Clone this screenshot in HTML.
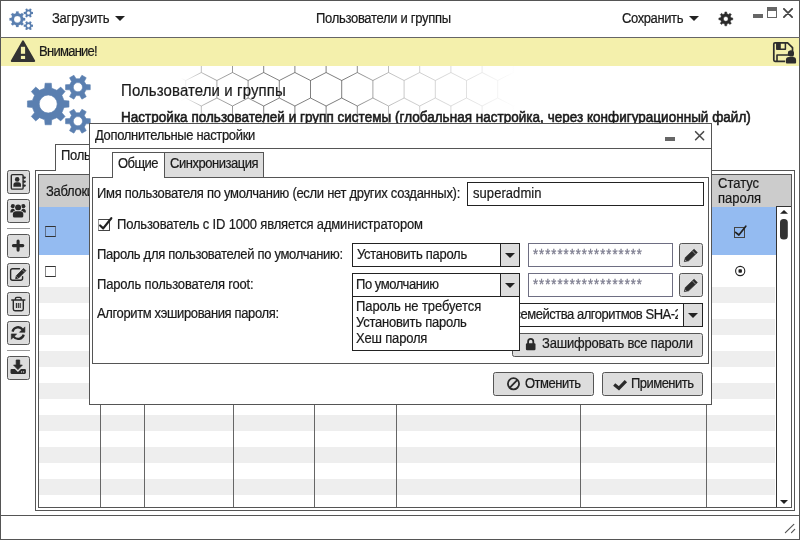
<!DOCTYPE html>
<html><head><meta charset="utf-8">
<style>
html,body{margin:0;padding:0;}
body{width:800px;height:540px;overflow:hidden;background:#fff;position:relative;font-family:"Liberation Sans",sans-serif;font-size:13px;color:#1a1a1a;}
.a{position:absolute;}
.t{position:absolute;white-space:nowrap;will-change:transform;transform:scaleY(1.07);transform-origin:0 78%;line-height:16px;letter-spacing:-0.3px;-webkit-text-stroke:0.2px #1a1a1a;}
.ln{position:absolute;background:#555;}
.btn{position:absolute;background:#ddd;border:1px solid #555;border-radius:2.5px;box-sizing:border-box;}
.cmb{position:absolute;background:#fff;border:1px solid #222;box-sizing:border-box;}
.cmb .ar{position:absolute;right:0;top:0;bottom:0;width:18px;background:#ddd;border-left:1px solid #222;}
.tri{position:absolute;width:0;height:0;border-left:5px solid transparent;border-right:5px solid transparent;border-top:5.5px solid #222;}
.pw{position:absolute;background:#fff;border:1px solid #6e6e82;box-sizing:border-box;}
</style></head><body>

<!-- ===== main window frame ===== -->
<div class="a" style="left:0;top:0;width:800px;height:540px;box-sizing:border-box;border:1px solid #555;"></div>
<div class="ln" style="left:0;top:37px;width:800px;height:1px;background:#666;"></div>
<div class="a" style="left:1px;top:38px;width:798px;height:28px;background:#f4f0ac;"></div>
<div class="ln" style="left:0;top:515px;width:800px;height:1px;"></div>

<svg class="a" style="left:780px;top:520px;" width="18" height="18" viewBox="780 520 18 18"><path d="M785.4 532.6 L793.8 524.4 M791.5 532.6 L794.7 529.4" stroke="#555" stroke-width="1.2" stroke-linecap="round"/></svg>
<!-- title bar -->
<svg class="a" style="left:8.5px;top:7.5px;" width="24.75" height="22.5"><use href="#cogs" width="24.75" height="22.5"/></svg>
<svg class="a" style="left:26px;top:74px;" width="66" height="60"><use href="#cogs" width="66" height="60"/></svg>
<div class="t" style="left:52px;top:11px;letter-spacing:-0.23px;">Загрузить</div>
<div class="tri" style="left:115px;top:16px;"></div>
<div class="t" style="left:316px;top:11px;">Пользователи и группы</div>
<div class="t" style="left:622px;top:11px;letter-spacing:-0.40px;">Сохранить</div>
<div class="tri" style="left:689px;top:16px;"></div>
<div class="a" style="left:753px;top:14px;width:10px;height:4px;background:#666;"></div>
<div class="a" style="left:767px;top:7px;width:10px;height:11px;box-sizing:border-box;border:1px solid #666;border-top:4px solid #666;"></div>
<svg class="a" style="left:783px;top:8px;" width="10" height="10" viewBox="0 0 10 10"><path d="M0.9 0.9 L9.1 9.1 M9.1 0.9 L0.9 9.1" stroke="#444" stroke-width="1.8" fill="none" stroke-linecap="round"/></svg>

<svg class="a" style="left:716px;top:9px;" width="20" height="20" viewBox="716 9 20 20"><path d="M726.83 24.10 L726.73 25.84 L724.87 25.84 L724.77 24.10 L722.86 23.31 L721.55 24.46 L720.24 23.15 L721.39 21.84 L720.60 19.93 L718.86 19.83 L718.86 17.97 L720.60 17.87 L721.39 15.96 L720.24 14.65 L721.55 13.34 L722.86 14.49 L724.77 13.70 L724.87 11.96 L726.73 11.96 L726.83 13.70 L728.74 14.49 L730.05 13.34 L731.36 14.65 L730.21 15.96 L731.00 17.87 L732.74 17.97 L732.74 19.83 L731.00 19.93 L730.21 21.84 L731.36 23.15 L730.05 24.46 L728.74 23.31Z M728.20 18.90 A2.40 2.40 0 1 0 723.40 18.90 A2.40 2.40 0 1 0 728.20 18.90 Z" fill="#2a2a2a" stroke="#2a2a2a" stroke-width="0.5" stroke-linejoin="round" fill-rule="evenodd"/></svg>
<svg class="a" style="left:770px;top:39px;" width="29" height="27" viewBox="770 39 29 27"><path d="M775 42.9 H787.6 L792.5 47.6 V61.3 H775 Q773.8 61.3 773.8 60.1 V44.1 Q773.8 42.9 775 42.9 Z" fill="none" stroke="#2d2d2d" stroke-width="1.7" stroke-linejoin="round"/><path d="M776.8 42.9 V49.2 H785.4 V42.9" fill="none" stroke="#2d2d2d" stroke-width="1.5" stroke-linejoin="round"/><rect x="776.8" y="42.9" width="4" height="6.3" fill="#2d2d2d"/><path d="M777 61.3 V55 H792.5" fill="none" stroke="#2d2d2d" stroke-width="1.6" stroke-linejoin="round"/><circle cx="790.9" cy="53.5" r="3.0" fill="#2d2d2d"/><path d="M785.2 64 V60 Q785.2 56.4 789 56.4 H793 Q796.8 56.4 796.8 60 V64 Z" fill="#f4f0ac"/><circle cx="790.9" cy="53.5" r="3.0" fill="#2d2d2d"/><path d="M785.9 62.5 V60 Q785.9 57.1 789 57.1 H793 Q796.1 57.1 796.1 60 V62.5 Q796.1 63.5 795.1 63.5 H786.9 Q785.9 63.5 785.9 62.5 Z" fill="#2d2d2d"/></svg>
<!-- warning bar -->
<svg class="a" style="left:9px;top:38px;" width="30" height="28" viewBox="9 38 30 28"><path d="M23 41.3 L34.3 61 L11.7 61 Z" fill="#333" stroke="#333" stroke-width="1.8" stroke-linejoin="round"/><rect x="20.9" y="46.8" width="4.2" height="7" fill="#f4f0ac"/><rect x="20.9" y="55.9" width="4.2" height="3.1" fill="#f4f0ac"/></svg>

<div class="t" style="left:39px;top:44px;letter-spacing:-0.73px;">Внимание!</div>

<!-- hex background -->
<svg class="a" style="left:170px;top:66px;" width="360" height="57" viewBox="170 66 360 57">
<defs><linearGradient id="hg" x1="0" x2="1" y1="0" y2="0"><stop offset="0.03" stop-color="#fff" stop-opacity="0"/><stop offset="0.1" stop-color="#fff" stop-opacity="0.6"/><stop offset="0.25" stop-color="#fff" stop-opacity="0.95"/><stop offset="0.49" stop-color="#fff" stop-opacity="1"/><stop offset="0.62" stop-color="#fff" stop-opacity="0.45"/><stop offset="0.83" stop-color="#fff" stop-opacity="0.22"/><stop offset="0.96" stop-color="#fff" stop-opacity="0"/></linearGradient>
<mask id="hm" maskUnits="userSpaceOnUse" x="170" y="66" width="360" height="57"><rect x="170" y="66" width="360" height="57" fill="url(#hg)"/></mask></defs>
<path d="M138.9 72.5 L154.5 80.5 L170.1 72.5 L185.7 80.5 L201.3 72.5 L216.9 80.5 L232.5 72.5 L248.1 80.5 L263.7 72.5 L279.3 80.5 L294.9 72.5 L310.5 80.5 L326.1 72.5 L341.7 80.5 L357.3 72.5 L372.9 80.5 L388.5 72.5 L404.1 80.5 L419.7 72.5 L435.3 80.5 L450.9 72.5 L466.5 80.5 L482.1 72.5 L497.7 80.5 L513.3 72.5 L528.9 80.5 L544.5 72.5 L560.1 80.5 M138.9 106.0 L154.5 98.0 L170.1 106.0 L185.7 98.0 L201.3 106.0 L216.9 98.0 L232.5 106.0 L248.1 98.0 L263.7 106.0 L279.3 98.0 L294.9 106.0 L310.5 98.0 L326.1 106.0 L341.7 98.0 L357.3 106.0 L372.9 98.0 L388.5 106.0 L404.1 98.0 L419.7 106.0 L435.3 98.0 L450.9 106.0 L466.5 98.0 L482.1 106.0 L497.7 98.0 L513.3 106.0 L528.9 98.0 L544.5 106.0 L560.1 98.0 M138.9 55 V72.5 M154.5 80.5 V98 M138.9 106 V123.5 M170.1 55 V72.5 M185.7 80.5 V98 M170.1 106 V123.5 M201.3 55 V72.5 M216.9 80.5 V98 M201.3 106 V123.5 M232.5 55 V72.5 M248.1 80.5 V98 M232.5 106 V123.5 M263.7 55 V72.5 M279.3 80.5 V98 M263.7 106 V123.5 M294.9 55 V72.5 M310.5 80.5 V98 M294.9 106 V123.5 M326.1 55 V72.5 M341.7 80.5 V98 M326.1 106 V123.5 M357.3 55 V72.5 M372.9 80.5 V98 M357.3 106 V123.5 M388.5 55 V72.5 M404.1 80.5 V98 M388.5 106 V123.5 M419.7 55 V72.5 M435.3 80.5 V98 M419.7 106 V123.5 M450.9 55 V72.5 M466.5 80.5 V98 M450.9 106 V123.5 M482.1 55 V72.5 M497.7 80.5 V98 M482.1 106 V123.5 M513.3 55 V72.5 M528.9 80.5 V98 M513.3 106 V123.5 M544.5 55 V72.5 M560.1 80.5 V98 M544.5 106 V123.5" stroke="#333" stroke-width="0.8" stroke-opacity="0.8" fill="none" mask="url(#hm)"/>
</svg>
<!-- header -->
<div class="t" style="left:121px;top:81px;font-size:15px;line-height:20px;letter-spacing:0.1px;">Пользователи и группы</div>
<div class="t" style="left:121px;top:109px;font-size:13.5px;line-height:18px;letter-spacing:0.02px;-webkit-text-stroke:0.55px #1a1a1a;">Настройка пользователей и групп системы (глобальная настройка, через конфигурационный файл)</div>

<!-- main tab + panel -->
<div class="a" style="left:35px;top:170px;width:760px;height:341px;box-sizing:border-box;border:1px solid #555;"></div>
<div class="a" style="left:55px;top:144px;width:60px;height:27px;box-sizing:border-box;border:1px solid #555;border-bottom:none;background:#fff;"></div>
<div class="t" style="left:61px;top:148px;">Пользователи</div>

<!-- sidebar -->
<div class="btn" style="left:6.5px;top:170px;width:23.5px;height:24px;"></div>
<div class="btn" style="left:6.5px;top:199px;width:23.5px;height:24px;"></div>
<div class="btn" style="left:6.5px;top:234px;width:23.5px;height:24px;"></div>
<div class="btn" style="left:6.5px;top:263px;width:23.5px;height:24px;"></div>
<div class="btn" style="left:6.5px;top:292px;width:23.5px;height:24px;"></div>
<div class="btn" style="left:6.5px;top:321px;width:23.5px;height:24px;"></div>
<div class="btn" style="left:6.5px;top:356px;width:23.5px;height:24px;"></div>
<div class="ln" style="left:7px;top:228px;width:23px;height:1px;background:#999;"></div>
<div class="ln" style="left:7px;top:350px;width:23px;height:1px;background:#999;"></div>
<!-- sidebar icons -->
<svg class="a" style="left:6px;top:168px;" width="26" height="214" viewBox="6 168 26 214">
<!-- address book -->
<rect x="11.3" y="174.6" width="11.8" height="14.5" rx="1.2" fill="none" stroke="#2a2a2a" stroke-width="1.4"/>
<path d="M23.8 177.6 h1 M23.8 181.6 h1 M23.8 185.6 h1" stroke="#2a2a2a" stroke-width="2.2" stroke-linecap="round"/>
<circle cx="17.2" cy="179.4" r="2.3" fill="#2a2a2a"/>
<path d="M13.4 186.8 V185 Q13.4 182.3 16 182.3 H18.4 Q21 182.3 21 185 V186.8 Z" fill="#2a2a2a"/>
<!-- users -->
<circle cx="12.9" cy="206.2" r="2.1" fill="#2a2a2a"/><circle cx="23.3" cy="206.2" r="2.1" fill="#2a2a2a"/>
<path d="M10.3 212.5 Q10.3 208.8 12.9 208.8 Q15 208.8 15.5 212.5 Z" fill="#2a2a2a"/><path d="M25.9 212.5 Q25.9 208.8 23.3 208.8 Q21.2 208.8 20.7 212.5 Z" fill="#2a2a2a"/>
<circle cx="18.1" cy="207.6" r="3.6" fill="#ddd"/><circle cx="18.1" cy="207.6" r="3.0" fill="#2a2a2a"/>
<path d="M12.3 218.2 V214.3 Q12.3 210.6 16 210.6 H20.2 Q23.9 210.6 23.9 214.3 V218.2 Z" fill="#ddd"/>
<path d="M12.9 216 V214.3 Q12.9 211.2 16 211.2 H20.2 Q23.3 211.2 23.3 214.3 V216 Q23.3 217.6 21.7 217.6 H14.5 Q12.9 217.6 12.9 216 Z" fill="#2a2a2a"/>
<!-- plus -->
<path d="M13.4 245.6 H22.8 M18.1 241 V250.1" stroke="#2a2a2a" stroke-width="3.1" stroke-linecap="round"/>
<!-- edit -->
<path d="M19.5 268.7 H12.6 Q10.6 268.7 10.6 270.7 V278.2 Q10.6 280.2 12.6 280.2 H20.6 Q22.6 280.2 22.6 278.2 V276.6" fill="none" stroke="#2a2a2a" stroke-width="1.4" stroke-linecap="round"/>
<path d="M23.6 268.4 L25.9 270.7 L18.6 278 L15.6 278.7 L16.3 275.7 Z" fill="#2a2a2a" stroke="#2a2a2a" stroke-width="0.8" stroke-linejoin="round"/>
<path d="M16.6 276.6 L17.7 277.7" stroke="#ddd" stroke-width="0.7"/>
<path d="M22.4 269.9 L24.4 271.9" stroke="#ddd" stroke-width="0.6"/>
<!-- trash -->
<path d="M11.8 300 H24.8" stroke="#2a2a2a" stroke-width="1.5" stroke-linecap="round"/>
<path d="M15.4 300 V298.8 Q15.4 297.4 16.8 297.4 H19.8 Q21.2 297.4 21.2 298.8 V300" fill="none" stroke="#2a2a2a" stroke-width="1.4"/>
<path d="M13.3 300 V309 Q13.3 310.7 15 310.7 H21.6 Q23.3 310.7 23.3 309 V300" fill="none" stroke="#2a2a2a" stroke-width="1.4"/>
<path d="M16.4 303 V308 M18.3 303 V308 M20.2 303 V308" stroke="#2a2a2a" stroke-width="1.1"/>
<!-- refresh -->
<path d="M12.5 331.6 A5.7 5.7 0 0 1 22.6 329.6" fill="none" stroke="#2a2a2a" stroke-width="2.3"/>
<path d="M24.9 326.9 V332.3 H19.5 Z" fill="#2a2a2a" stroke="#2a2a2a" stroke-width="0.6" stroke-linejoin="round"/>
<path d="M23.7 334.6 A5.7 5.7 0 0 1 13.6 336.6" fill="none" stroke="#2a2a2a" stroke-width="2.3"/>
<path d="M11.3 339.3 V333.9 H16.7 Z" fill="#2a2a2a" stroke="#2a2a2a" stroke-width="0.6" stroke-linejoin="round"/>
<!-- download -->
<path d="M16.2 360 H19.7 V365.1 H22.3 L17.95 369.6 L13.6 365.1 H16.2 Z" fill="#2a2a2a" stroke="#2a2a2a" stroke-width="0.8" stroke-linejoin="round"/>
<path d="M11.6 369 H14.9 L17.95 372 L21 369 H24.8 Q25.9 369 25.9 370.1 V372.8 Q25.9 373.9 24.8 373.9 H11.6 Q10.5 373.9 10.5 372.8 V370.1 Q10.5 369 11.6 369 Z" fill="#2a2a2a"/>
<path d="M21.6 371.2 V372.6 M23.6 371.2 V372.6" stroke="#ddd" stroke-width="0.9"/>
</svg>
<!-- table -->
<div class="a" id="tbl" style="left:38px;top:174px;width:754px;height:334px;box-sizing:border-box;border:1px solid #555;background:#fff;overflow:hidden;">
<div class="a" style="left:0;top:0;width:752px;height:32px;background:#ccc;"></div>
<div class="a" style="left:0;top:32px;width:737px;height:47.5px;background:#94bbf1;"></div>
<div class="a" style="left:0;top:112px;width:736px;height:16px;background:#eee;"></div>
<div class="a" style="left:0;top:144px;width:736px;height:16px;background:#eee;"></div>
<div class="a" style="left:0;top:176px;width:736px;height:16px;background:#eee;"></div>
<div class="a" style="left:0;top:208px;width:736px;height:16px;background:#eee;"></div>
<div class="a" style="left:0;top:240px;width:736px;height:16px;background:#eee;"></div>
<div class="a" style="left:0;top:272px;width:736px;height:16px;background:#eee;"></div>
<div class="a" style="left:0;top:304px;width:736px;height:16px;background:#eee;"></div>
<div class="ln" style="left:61px;top:0;width:1px;height:340px;background:#666;"></div>
<div class="ln" style="left:105px;top:0;width:1px;height:340px;background:#666;"></div>
<div class="ln" style="left:194px;top:0;width:1px;height:340px;background:#666;"></div>
<div class="ln" style="left:275px;top:0;width:1px;height:340px;background:#666;"></div>
<div class="ln" style="left:357px;top:0;width:1px;height:340px;background:#666;"></div>
<div class="ln" style="left:541px;top:0;width:1px;height:340px;background:#666;"></div>
<div class="ln" style="left:667px;top:0;width:1px;height:340px;background:#666;"></div>

<div class="t" style="left:7px;top:9px;">Заблокирован</div>
<div class="t" style="left:678.5px;top:1px;line-height:15px;letter-spacing:0px;">Статус</div><div class="t" style="left:678.5px;top:15.7px;line-height:15px;letter-spacing:0px;">пароля</div>
<!-- row checkboxes -->
<div class="a" style="left:6px;top:51px;width:11px;height:11px;box-sizing:border-box;border:1px solid #333;border-left-color:#5d6f8c;border-right-color:#5d6f8c;"></div>
<div class="a" style="left:6px;top:91px;width:11px;height:11px;box-sizing:border-box;border:1px solid #333;border-left-color:#8a8a8a;border-right-color:#8a8a8a;background:#fff;"></div>
<div class="a" style="left:694.5px;top:51.5px;width:11px;height:11px;box-sizing:border-box;border:1px solid #444;"></div>
<svg class="a" style="left:692px;top:47px;" width="20" height="60" viewBox="731 222 20 60"><path d="M735.6 232.4 L738.9 235 L745.8 226.2" stroke="#222" stroke-width="1.7" fill="none" stroke-linecap="round" stroke-linejoin="round"/><circle cx="740.2" cy="271" r="4.6" fill="#fff" stroke="#222" stroke-width="1.1"/><rect x="738.5" y="269.3" width="3.4" height="3.4" rx="0.8" fill="#222"/></svg>
<!-- scrollbar -->
<div class="a" style="left:737px;top:31px;width:15px;height:303px;box-sizing:border-box;border-left:1px solid #333;border-top:1px solid #333;background:#fff;"></div>
<svg class="a" style="left:737px;top:32px;" width="15" height="300"><path d="M4 6.8 L8 3 L12 6.8Z" fill="#222"/><rect x="4" y="12" width="7.8" height="20.6" rx="3.6" fill="#333"/><path d="M4 293 L12 293 L8 297Z" fill="#222"/></svg>
</div>
<!-- ===== dialog ===== -->
<div class="a" id="dlg" style="left:89px;top:123px;width:623px;height:282px;box-sizing:border-box;border:1px solid #555;background:#fff;"></div>
<div class="ln" style="left:89px;top:148px;width:623px;height:1px;"></div>
<div class="t" style="left:95px;top:128px;letter-spacing:-0.34px;">Дополнительные настройки</div>

<!-- dialog controls -->
<div class="a" style="left:665px;top:137px;width:10px;height:4px;background:#666;"></div>
<svg class="a" style="left:694px;top:130px;" width="11" height="11" viewBox="0 0 11 11"><path d="M1.6 1.7 L9.6 9.7 M9.6 1.7 L1.6 9.7" stroke="#4a4a4a" stroke-width="1.6" fill="none" stroke-linecap="round"/></svg>
<!-- dialog tabs -->
<div class="a" style="left:92px;top:177px;width:617px;height:187px;box-sizing:border-box;border:1px solid #555;background:#fff;"></div>
<div class="a" style="left:164px;top:152px;width:100px;height:26px;box-sizing:border-box;border:1px solid #555;background:#ddd;"></div>
<div class="a" style="left:112px;top:152px;width:53px;height:26px;box-sizing:border-box;border:1px solid #555;border-bottom:none;background:#fff;"></div>
<div class="t" style="left:118px;top:156px;letter-spacing:-0.55px;">Общие</div>
<div class="t" style="left:170px;top:156px;letter-spacing:-0.47px;">Синхронизация</div>
<!-- row 1 -->
<div class="t" style="left:97px;top:186px;letter-spacing:-0.29px;">Имя пользователя по умолчанию (если нет других созданных):</div>
<div class="cmb" style="left:467px;top:182px;width:237px;height:24px;"></div>
<div class="t" style="left:472.5px;top:186px;letter-spacing:0.06px;">superadmin</div>
<!-- row 2 -->
<div class="a" style="left:97.5px;top:218.5px;width:12.3px;height:12.3px;box-sizing:border-box;border:1px solid #444;border-left-color:#999;"></div>
<svg class="a" style="left:98px;top:215px;" width="16" height="16" viewBox="0 0 16 16"><path d="M2.1 10.5 L5.2 13.4 L13.3 3.2" stroke="#222" stroke-width="2.2" fill="none" stroke-linecap="round" stroke-linejoin="round"/></svg>
<div class="t" style="left:117px;top:217px;letter-spacing:-0.17px;">Пользователь с ID 1000 является администратором</div>
<!-- row 3 -->
<div class="t" style="left:97px;top:247px;letter-spacing:-0.30px;">Пароль для пользователей по умолчанию:</div>
<div class="cmb" style="left:352px;top:243px;width:168px;height:24px;"><div class="ar"><div class="tri" style="left:4px;top:9px;"></div></div></div>
<div class="t" style="left:356.5px;top:247px;letter-spacing:-0.28px;">Установить пароль</div>
<div class="pw" style="left:528px;top:243px;width:145px;height:24px;"></div>
<div class="t" style="left:533px;top:247px;color:#7c7c8e;-webkit-text-stroke:0.3px #7c7c8e;letter-spacing:1.05px;">******************</div>
<div class="btn" style="left:679px;top:243px;width:24px;height:24px;"></div>
<!-- row 4 -->
<div class="t" style="left:97px;top:277px;letter-spacing:-0.17px;">Пароль пользователя root:</div>
<div class="cmb" style="left:352px;top:273px;width:168px;height:24px;"><div class="ar"><div class="tri" style="left:4px;top:9px;"></div></div></div>
<div class="t" style="left:356px;top:277px;letter-spacing:-0.45px;">По умолчанию</div>
<div class="pw" style="left:528px;top:273px;width:145px;height:24px;"></div>
<div class="t" style="left:533px;top:277px;color:#7c7c8e;-webkit-text-stroke:0.3px #7c7c8e;letter-spacing:1.05px;">******************</div>
<div class="btn" style="left:679px;top:273px;width:24px;height:24px;"></div>
<!-- row 5 -->
<div class="t" style="left:97px;top:306px;letter-spacing:-0.37px;">Алгоритм хэширования пароля:</div>
<div class="cmb" style="left:352px;top:303px;width:351px;height:24px;"><div class="ar"><div class="tri" style="left:4px;top:9px;"></div></div></div>
<div class="a" style="left:353px;top:304px;width:325px;height:22px;overflow:hidden;"><div class="t" style="right:-3.5px;top:2.5px;letter-spacing:-0.47px;">Хеш пароля семейства алгоритмов SHA-2</div></div>
<div class="btn" style="left:512px;top:333px;width:191px;height:24px;"></div>
<div class="t" style="left:542px;top:336px;letter-spacing:-0.21px;">Зашифровать все пароли</div>
<!-- dropdown list -->
<div class="cmb" style="left:352px;top:296px;width:168px;height:55px;"></div>
<div class="t" style="left:356px;top:299px;letter-spacing:-0.08px;">Пароль не требуется</div>
<div class="t" style="left:356px;top:315px;letter-spacing:-0.24px;">Установить пароль</div>
<div class="t" style="left:356px;top:331px;letter-spacing:-0.18px;">Хеш пароля</div>
<!-- bottom buttons -->
<div class="btn" style="left:493px;top:372px;width:101px;height:24px;"></div>
<div class="t" style="left:525px;top:376px;letter-spacing:-0.50px;">Отменить</div>
<div class="btn" style="left:602px;top:372px;width:101px;height:24px;"></div>
<div class="t" style="left:631px;top:376px;letter-spacing:-0.53px;">Применить</div>

<!-- dialog icons -->
<svg class="a" style="left:500px;top:240px;" width="210" height="160" viewBox="500 240 210 160">
<path d="M684.3 261.6 L685.4 257.4 L694.1 249.2 L697.3 252.6 L688.6 260.8 Z" fill="#2a2a2a" stroke="#2a2a2a" stroke-width="0.7" stroke-linejoin="round"/><path d="M692.4 250.8 L695.6 254.2" stroke="#ddd" stroke-width="0.6"/><circle cx="685.7" cy="260.3" r="0.55" fill="#ddd"/>
<path d="M684.3 291.6 L685.4 287.4 L694.1 279.2 L697.3 282.6 L688.6 290.8 Z" fill="#2a2a2a" stroke="#2a2a2a" stroke-width="0.7" stroke-linejoin="round"/><path d="M692.4 280.8 L695.6 284.2" stroke="#ddd" stroke-width="0.6"/><circle cx="685.7" cy="290.3" r="0.55" fill="#ddd"/>
<!-- lock -->
<path d="M528.1 344 V341.4 Q528.1 338.8 530.7 338.8 Q533.3 338.8 533.3 341.4 V344" fill="none" stroke="#2a2a2a" stroke-width="1.8"/>
<rect x="525.9" y="343.2" width="9.6" height="7" rx="1.2" fill="#2a2a2a"/>
<!-- ban -->
<circle cx="513.5" cy="383.8" r="5.6" fill="none" stroke="#2a2a2a" stroke-width="1.8"/>
<path d="M509.6 387.8 L517.4 379.8" stroke="#2a2a2a" stroke-width="1.8"/>
<!-- check -->
<path d="M614.2 384.5 L618.9 388.3 L625.9 381.1" fill="none" stroke="#2a2a2a" stroke-width="3.3" stroke-linejoin="miter"/>
</svg>
<svg width="0" height="0" style="position:absolute">
<defs>
<symbol id="cogs" viewBox="26 74 66 60"><path fill="#5a7fb0" stroke="#5a7fb0" stroke-width="0.6" stroke-linejoin="round" fill-rule="evenodd" d="M51.73 119.81 L51.32 124.77 L45.08 124.77 L44.67 119.81 L39.52 117.68 L35.72 120.89 L31.31 116.48 L34.52 112.68 L32.39 107.53 L27.43 107.12 L27.43 100.88 L32.39 100.47 L34.52 95.32 L31.31 91.52 L35.72 87.11 L39.52 90.32 L44.67 88.19 L45.08 83.23 L51.32 83.23 L51.73 88.19 L56.88 90.32 L60.68 87.11 L65.09 91.52 L61.88 95.32 L64.01 100.47 L68.97 100.88 L68.97 107.12 L64.01 107.53 L61.88 112.68 L65.09 116.48 L60.68 120.89 L56.88 117.68Z M57.20 104.00 A9.00 9.00 0 1 0 39.20 104.00 A9.00 9.00 0 1 0 57.20 104.00 Z M86.08 84.54 L90.25 84.71 L90.25 89.69 L86.08 89.86 L84.29 92.95 L86.23 96.65 L81.92 99.14 L79.69 95.61 L76.11 95.61 L73.88 99.14 L69.57 96.65 L71.51 92.95 L69.72 89.86 L65.55 89.69 L65.55 84.71 L69.72 84.54 L71.51 81.45 L69.57 77.75 L73.88 75.26 L76.11 78.79 L79.69 78.79 L81.92 75.26 L86.23 77.75 L84.29 81.45Z M82.50 87.20 A4.60 4.60 0 1 0 73.30 87.20 A4.60 4.60 0 1 0 82.50 87.20 Z M86.08 118.54 L90.25 118.71 L90.25 123.69 L86.08 123.86 L84.29 126.95 L86.23 130.65 L81.92 133.14 L79.69 129.61 L76.11 129.61 L73.88 133.14 L69.57 130.65 L71.51 126.95 L69.72 123.86 L65.55 123.69 L65.55 118.71 L69.72 118.54 L71.51 115.45 L69.57 111.75 L73.88 109.26 L76.11 112.79 L79.69 112.79 L81.92 109.26 L86.23 111.75 L84.29 115.45Z M82.50 121.20 A4.60 4.60 0 1 0 73.30 121.20 A4.60 4.60 0 1 0 82.50 121.20 Z"/></symbol>
</defs>
</svg>
</body></html>
